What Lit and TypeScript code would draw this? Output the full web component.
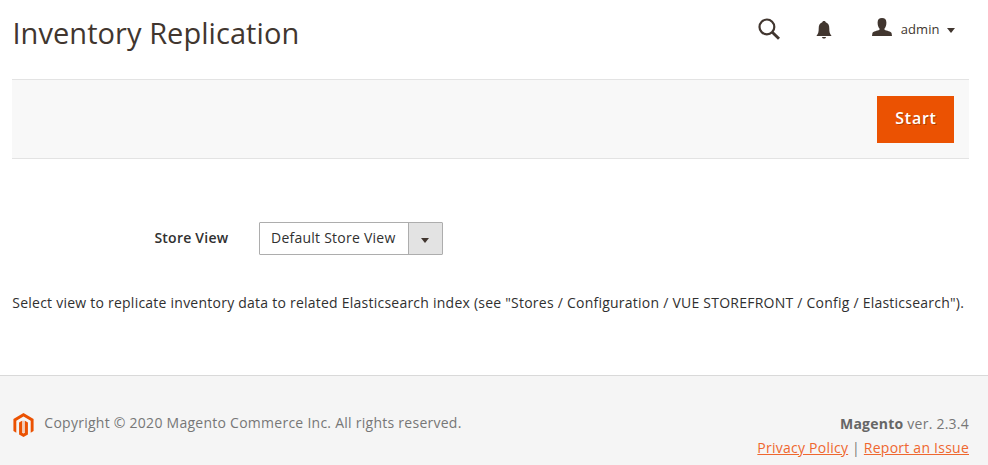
import { LitElement, html, css } from "lit";
import { customElement } from "lit/decorators.js";

@customElement("app-root")
class AppRoot extends LitElement {
  static styles = css`
    * { box-sizing: border-box; }
    :host { display: flex; flex-direction: column; height: 465px; overflow: hidden; background: #fff; color: #303030; font: 14px/20px "Open Sans", sans-serif; letter-spacing: .24px; }
    header { display: flex; justify-content: space-between; height: 79px; padding: 11px 33px 0 12.4px; color: #41362f; }
    h1 { margin: 0; font-size: 29px; font-weight: 400; line-height: 44px; letter-spacing: .06px; }
    .tools { display: flex; align-items: center; height: 36px; }
    .search { width: 22px; height: 22px; margin-right: 36px; }
    .bell { width: 16px; height: 18px; margin: 1px 40px 0 0; }
    .user { width: 20px; height: 18px; margin: -4px 8.5px 0 0; }
    .admin { font-size: 13px; letter-spacing: .05px; }
    .caret { border: 4px solid transparent; border-top: 5px solid #41362f; border-bottom: 0; }
    .tools .caret { margin: 3px 0 0 7.5px; }
    .actions { display: flex; justify-content: flex-end; align-items: center; height: 80px; margin: 0 19px 0 12px; padding-right: 15px; background: #f8f8f8; border: solid #e3e3e3; border-width: 1px 0; }
    button { width: 77px; height: 47px; border: 0; background: #eb5202; color: #fff; font: 600 16px "Open Sans", sans-serif; letter-spacing: .75px; padding: 0 0 2px 1px; text-shadow: 1px 1px 0 rgba(0,0,0,.25); }
    .field { display: flex; align-items: center; margin: 63px 0 0 154px; height: 33px; }
    .label { font-weight: 600; width: 105px; padding: 0 0 2px .4px; }
    .select { display: flex; width: 184px; height: 33px; border: 1px solid #adadad; border-radius: 1px; }
    .value { flex: 1; padding: 5px 0 0 11px; }
    .arrow { display: flex; align-items: center; justify-content: center; width: 34px; padding: 4px 1px 0 0; border-left: 1px solid #adadad; background: #e3e3e3; }
    .note { margin: 38px 0 0 12.3px; white-space: nowrap; letter-spacing: .235px; }
    footer { display: flex; justify-content: space-between; margin-top: auto; height: 90px; padding: 36px 19px 0 12px; background: #f5f5f5; border-top: 1px solid #d9d9d9; color: #777; }
    .copy { display: flex; height: 25px; padding-top: 1px; letter-spacing: .26px; }
    .logo { width: 23px; height: 24px; margin-right: 9.3px; }
    .right { text-align: right; line-height: 24px; }
    b { font-weight: 700; color: #666; }
    a { color: #ef672f; text-decoration: underline; }
  `;

  render() {
    return html`
      <header>
        <h1>Inventory Replication</h1>
        <div class="tools">
          <svg class="search" viewBox="0 0 22 22" fill="none" stroke="#41362f"><circle cx="8.900" cy="8.900" r="7.400" stroke-width="2.200"/><path d="M14.300 14.300 21 20.800" stroke-width="2.900"/></svg>
          <svg class="bell" viewBox="0 0 16 18" fill="#41362f"><path d="M8 0C8.900 0 9.500.5 9.700 1.300 12.400 2.200 13.300 4.500 13.300 7.500c0 3.500.4 5 2.300 7.500H.4C2.300 12.500 2.700 11 2.700 7.500c0-3 .9-5.300 3.600-6.200C6.500.5 7.100 0 8 0ZM6 16h4c-.2 1-.9 1.600-2 1.600S6.200 17 6 16Z"/></svg>
          <svg class="user" viewBox="0 0 20 18" fill="#41362f"><path d="M10 0c2.800 0 4.400 1.400 4.400 4.500 0 2.700-.7 4.800-1.900 6v1.200c2.200 1.300 6.500 1.300 7.100 3.600l.4 2.700H0l.4-2.700c.6-2.300 4.900-2.300 7.100-3.600v-1.200c-1.200-1.200-1.900-3.300-1.900-6C5.600 1.400 7.200 0 10 0Z"/></svg>
          <span class="admin">admin</span><span class="caret"></span>
        </div>
      </header>
      <div class="actions"><button>Start</button></div>
      <div class="field">
        <span class="label">Store View</span>
        <div class="select"><span class="value">Default Store View</span><span class="arrow"><span class="caret"></span></span></div>
      </div>
      <div class="note">Select view to replicate inventory data to related Elasticsearch index (see "Stores / Configuration / VUE STOREFRONT / Config / Elasticsearch").</div>
      <footer>
        <div class="copy">
          <svg class="logo" viewBox="0 0 23 25" fill="#eb5202"><path d="M11.500 0 22 6.200V18.700L19 20.500V8L11.500 3.600 4 8V20.500L1 18.700V6.200Z"/><path d="M6.900 9.800 10 8V20.500L11.500 21.400 13 20.500V8L16.100 9.800V22.300L11.500 25 6.900 22.300Z"/><path d="M10 8h3v12.500h-3Z" opacity=".25"/></svg>
          <span>Copyright © 2020 Magento Commerce Inc. All rights reserved.</span>
        </div>
        <div class="right"><div><b>Magento</b> ver. 2.3.4</div><div><a>Privacy Policy</a> | <a>Report an Issue</a></div></div>
      </footer>
    `;
  }
}
